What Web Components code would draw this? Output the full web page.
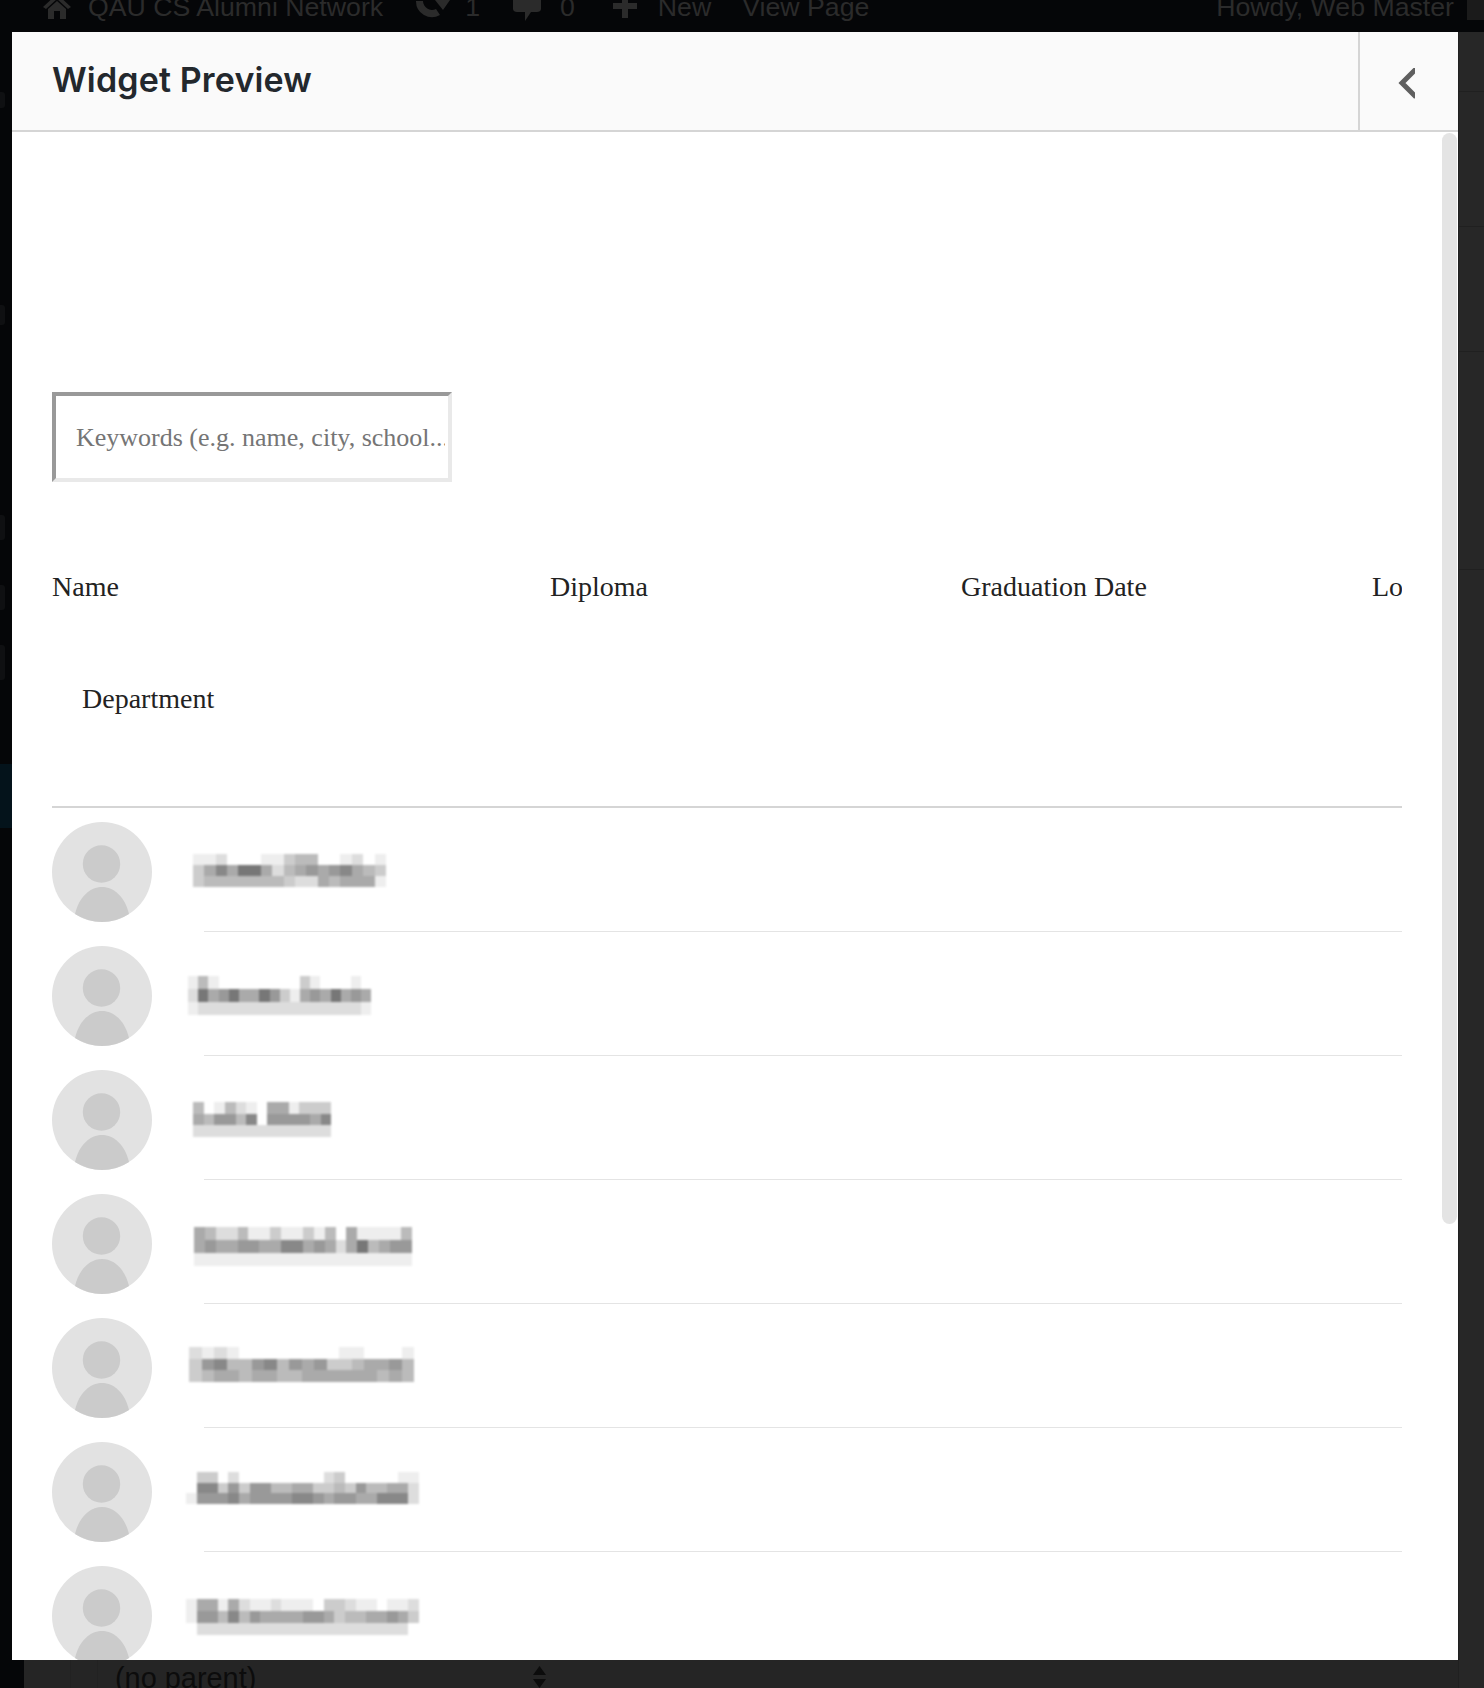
<!DOCTYPE html>
<html>
<head>
<meta charset="utf-8">
<title>Widget Preview</title>
<style>
  html, body { margin: 0; height: 1688px; overflow: hidden; background: #262626; }
</style>
</head>
<body>
<wp-backdrop>
  <wp-adminbar slot="bar"></wp-adminbar>
  <wp-sidebar slot="side"></wp-sidebar>
  <wp-railstrip slot="rail"></wp-railstrip>
  <parent-select slot="foot">(no parent)</parent-select>
</wp-backdrop>

<widget-modal>
  <span slot="title">Widget Preview</span>
  <search-box>Keywords (e.g. name, city, school...</search-box>
  <table-head></table-head>
  <person-row x="141" top="32" w="11.35" h="11" rows="eedfffeecbbffedfe|ca8a77adba9a98abc|cbbbbbbbcddabaaae"></person-row>
  <person-row x="136" top="30" w="10.2" h="13" rows="ebeffffffffcefffef|d7a97aa79cea9a7a9a|edddddddddddddddde"></person-row>
  <person-row x="141" top="32" w="10.65" h="11.7" rows="bfebdefaaeccc|ab99b8f9999a8|ddddddddddddd"></person-row>
  <person-row x="142" top="33" w="10.9" h="13" rows="abddbeeceecebfaeeeeb|a9aa99aa88a9ada7ba99|eeeeeeeeeeeeeeeeeeee"></person-row>
  <person-row x="137" top="29" w="12.5" h="11.7" rows="dedeffffffffeefffe|c98bb98b9a9ccbaa9b|cbaabaabbaaaaaabab"></person-row>
  <person-row x="134" top="30" w="10.6" h="10.7" rows="fccfdffffffffdcfffffee|f88c9c99bbaaccbc9bbaad|e9998a9999889a99aa888d"></person-row>
  <person-row x="134" top="33" w="10.6" h="12" rows="eaaeadeedeeefccdeefeed|e99b8b9aaaa99acbbaa9ac|fddddddddddddddddddddf"></person-row>
</widget-modal>

<script>
// dim wordpress screen behind the modal
class WpBackdrop extends HTMLElement {
  constructor() {
    super();
    this.attachShadow({ mode: 'open' }).innerHTML = `
      <style>
        :host { display: grid; grid-template-columns: 24px 1fr 26px; grid-template-rows: 32px 1fr 28px; width: 1484px; height: 1688px; background: #252525; overflow: hidden; }
        .bar { grid-column: 1 / 4; }
        .side { grid-row: 2 / 4; }
        .rail { grid-column: 3; grid-row: 2 / 4; }
        .foot { grid-column: 2; grid-row: 3; }
      </style>
      <div class="bar"><slot name="bar"></slot></div>
      <div class="side"><slot name="side"></slot></div>
      <div class="rail"><slot name="rail"></slot></div>
      <div class="foot"><slot name="foot"></slot></div>
    `;
  }
}

class WpAdminbar extends HTMLElement {
  constructor() {
    super();
    this.attachShadow({ mode: 'open' }).innerHTML = `
      <style>
        :host { display: flex; align-items: flex-start; height: 32px; background: #050608; color: #2b2b2b; font: 26.7px/30px "Liberation Sans", Arial, sans-serif; overflow: hidden; white-space: nowrap; }
        span { display: block; margin-top: -8px; }
        svg { display: block; flex: none; fill: #2b2b2b; }
        .me { margin-left: auto; }
        .box { width: 17px; height: 20px; margin-left: 13px; background: #1b1b1b; flex: none; }
      </style>
      <svg width="28" height="20" viewBox="0 0 28 20" style="margin-left:43px"><path d="M14 -6 28 7 25 9 14 -1 3 9 0 7ZM5 9 14 1 23 9V19H17V11H11V19H5Z"/></svg>
      <span style="margin-left:17px">QAU CS Alumni Network</span>
      <svg width="35" height="19" viewBox="0 0 35 19" style="margin-left:32px"><path d="M1 1A16 16 0 0 0 25 15L21 9A9 9 0 0 1 8 1ZM20 0H35L28 10Z"/></svg>
      <span style="margin-left:15px">1</span>
      <svg width="28" height="22" viewBox="0 0 28 22" style="margin-left:33px"><path d="M0 -4H28V9C28 11 26 12 24 12H18L12 21V12H4C2 12 0 11 0 9Z"/></svg>
      <span style="margin-left:19px">0</span>
      <svg width="24" height="18" viewBox="0 0 24 18" style="margin-left:38px"><path d="M9 -4H15V3H24V9H15V18H9V9H0V3H9Z"/></svg>
      <span style="margin-left:21px">New</span>
      <span style="margin-left:31px">View Page</span>
      <span class="me">Howdy, Web Master</span>
      <div class="box"></div>
    `;
  }
}

class WpSidebar extends HTMLElement {
  constructor() {
    super();
    this.attachShadow({ mode: 'open' }).innerHTML = `
      <style>
        :host { display: flex; flex-direction: column; height: 100%; background: #050608; }
        i { display: block; width: 5px; background: #0f1012; border-radius: 0 3px 3px 0; }
        .now { width: 100%; height: 64px; margin-top: 84px; background: #04131b; border-radius: 0; }
      </style>
      <i style="height:16px;margin-top:60px"></i>
      <i style="height:20px;margin-top:197px"></i>
      <i style="height:25px;margin-top:190px"></i>
      <i style="height:25px;margin-top:45px"></i>
      <i style="height:35px;margin-top:35px"></i>
      <div class="now"></div>
    `;
  }
}

class WpRailstrip extends HTMLElement {
  constructor() {
    super();
    this.attachShadow({ mode: 'open' }).innerHTML = `
      <style>
        :host { display: block; height: 100%; background: #272727; border-left: 1px solid #202020; box-sizing: border-box; }
        div { border-bottom: 1px solid #202020; box-sizing: border-box; }
      </style>
      <div style="height:60px"></div>
      <div style="height:135px"></div>
      <div style="height:125px"></div>
      <div style="height:218px"></div>
    `;
  }
}

class ParentSelect extends HTMLElement {
  constructor() {
    super();
    this.attachShadow({ mode: 'open' }).innerHTML = `
      <style>
        :host { display: flex; height: 28px; color: #0c0c0c; font: 28.9px/36px "Liberation Sans", Arial, sans-serif; overflow: hidden; }
        .cell { flex: none; border-right: 1px solid #222; }
        .txt { width: 435px; padding-left: 17px; box-sizing: border-box; white-space: nowrap; }
        svg { display: block; margin-top: 6px; flex: none; fill: #0c0c0c; }
      </style>
      <div class="cell" style="width:46px"></div>
      <div class="cell" style="width:26px"></div>
      <div class="txt"><slot></slot></div>
      <svg width="13" height="22" viewBox="0 0 13 22"><path d="M6.5 0 13 9H0ZM0 13H13L6.5 22Z"/></svg>
    `;
  }
}

class WidgetModal extends HTMLElement {
  constructor() {
    super();
    this.attachShadow({ mode: 'open' }).innerHTML = `
      <style>
        :host { display: flex; flex-direction: column; position: absolute; left: 12px; top: 32px; width: 1446px; height: 1628px; background: #fff; overflow: hidden; }
        header { display: flex; flex: none; height: 100px; box-sizing: border-box; background: #fafafa; border-bottom: 2px solid #d5d5d5; }
        h1 { flex: 1; margin: 0; padding-left: 40px; color: #23282d; font: 600 34px/96px Inter, Roboto, sans-serif; letter-spacing: .15px; }
        .back { display: flex; align-items: center; justify-content: center; flex: none; width: 100px; box-sizing: border-box; border-left: 2px solid #d5d5d5; padding-right: 6px; }
        .back svg { display: block; margin-top: 6px; }
        main { flex: 1; min-height: 0; padding: 260px 56px 0 40px; overflow: hidden; }
        .thumb { position: absolute; left: 1430px; top: 101px; width: 15px; height: 1091px; background: #e4e4e4; border-radius: 8px; }
      </style>
      <header>
        <h1><slot name="title"></slot></h1>
        <div class="back"><svg width="17" height="32" viewBox="0 0 17 32"><path d="M18 1 4 15 18 29" fill="none" stroke="#5f5f5f" stroke-width="5"/></svg></div>
      </header>
      <main><slot></slot></main>
      <div class="thumb"></div>
    `;
  }
}

class SearchBox extends HTMLElement {
  constructor() {
    super();
    this.attachShadow({ mode: 'open' }).innerHTML = `
      <style>
        :host { display: block; width: 400px; height: 90px; box-sizing: border-box; border: 4px solid; border-color: #999 #e9e9e9 #e9e9e9 #999; padding: 0 0 0 20px; background: #fff; color: #757575; font: 26px/84px "Liberation Serif", "Times New Roman", serif; }
        div { width: 369px; height: 82px; white-space: nowrap; overflow: hidden; }
      </style>
      <div><slot></slot></div>
    `;
  }
}

class TableHead extends HTMLElement {
  constructor() {
    super();
    this.attachShadow({ mode: 'open' }).innerHTML = `
      <style>
        :host { display: block; height: 326px; box-sizing: border-box; padding-top: 89px; border-bottom: 2px solid #d5d5d5; color: #222; font: 28px/32px "Liberation Serif", "Times New Roman", serif; overflow: hidden; }
        .cols { display: flex; white-space: nowrap; }
        .cols div { flex: none; }
        .dept { margin-top: 80px; padding-left: 30px; }
      </style>
      <div class="cols">
        <div style="width:498px">Name</div>
        <div style="width:411px">Diploma</div>
        <div style="width:411px">Graduation Date</div>
        <div style="width:30px;overflow:hidden">Location</div>
      </div>
      <div class="dept">Department</div>
    `;
  }
}

// pixelated name, the source picture has them censored with a mosaic
class MosaicName extends HTMLElement {
  constructor() {
    super();
    this.attachShadow({ mode: 'open' });
  }

  connectedCallback() {
    const rows = this.getAttribute('rows').split('|');
    const w = this.getAttribute('w');
    const h = this.getAttribute('h');
    const cells = rows.join('').split('').map(c => `<i style="background:#${c}${c}${c}"></i>`).join('');
    this.shadowRoot.innerHTML = `
      <style>
        :host { display: grid; grid-template-columns: repeat(${rows[0].length}, ${w}px); grid-auto-rows: ${h}px; filter: blur(.8px); }
        i { display: block; }
      </style>
      ${cells}
    `;
  }
}

class PersonRow extends HTMLElement {
  constructor() {
    super();
    this.attachShadow({ mode: 'open' });
  }

  connectedCallback() {
    const x = this.getAttribute('x');
    const top = this.getAttribute('top');
    this.shadowRoot.innerHTML = `
      <style>
        :host { display: block; height: 124px; box-sizing: border-box; padding-top: 14px; }
        .line { display: flex; height: 100px; }
        svg { display: block; flex: none; }
        mosaic-name { margin-left: ${x - 100}px; margin-top: ${top}px; align-self: flex-start; }
        .sep { height: 1px; margin: 9px 0 0 152px; background: #e4e4e4; }
      </style>
      <div class="line">
        <svg width="100" height="100" viewBox="0 0 100 100">
          <circle cx="50" cy="50" r="50" fill="#e2e2e2"/>
          <circle cx="49.5" cy="42" r="18.7" fill="#cbcbcb"/>
          <path d="M23 92C27 75 38 65 50 65C62 65 73 75 77 92A50 50 0 0 1 23 92Z" fill="#cbcbcb"/>
        </svg>
        <mosaic-name w="${this.getAttribute('w')}" h="${this.getAttribute('h')}" rows="${this.getAttribute('rows')}"></mosaic-name>
      </div>
      <div class="sep"></div>
    `;
  }
}

window.customElements.define('wp-backdrop', WpBackdrop);
window.customElements.define('wp-adminbar', WpAdminbar);
window.customElements.define('wp-sidebar', WpSidebar);
window.customElements.define('wp-railstrip', WpRailstrip);
window.customElements.define('parent-select', ParentSelect);
window.customElements.define('widget-modal', WidgetModal);
window.customElements.define('search-box', SearchBox);
window.customElements.define('table-head', TableHead);
window.customElements.define('mosaic-name', MosaicName);
window.customElements.define('person-row', PersonRow);
</script>
</body>
</html>
